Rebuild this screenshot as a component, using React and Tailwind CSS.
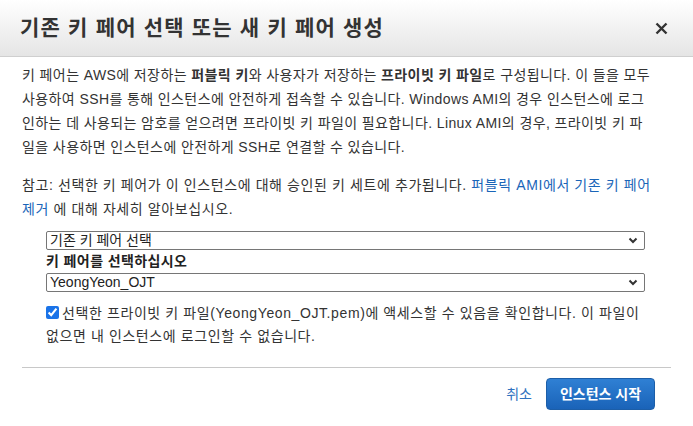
import React from 'react';

const font = { fontFamily: '"Liberation Sans", "Noto Sans CJK KR", sans-serif' };

function Chevron() {
    return (
        <svg width="10" height="7" viewBox="0 0 10 7" className="mr-[6px]">
            <path d="M1.5 1.5 L5 5 L8.5 1.5" fill="none" stroke="#333" strokeWidth="2" />
        </svg>
    );
}

function SelectBox({ value }) {
    return (
        <div className="flex h-[19px] items-center justify-between rounded-[2px] border border-[#767676] bg-white pl-[3px] text-[14px] leading-[17px] tracking-normal text-[#222]">
            <span>{value}</span>
            <Chevron />
        </div>
    );
}

export default function App() {
    return (
        <div className="h-[426px] w-[693px] overflow-hidden bg-white text-[#333]" style={font}>
            {/* Header */}
            <div className="flex h-[57px] items-center justify-between border-b border-[#cfcfcf] bg-gradient-to-b from-white to-[#e5e5e5] pl-[20px] pr-[25px]">
                <h1 className="text-[21px] font-bold tracking-[1.2px] text-[#333]">기존 키 페어 선택 또는 새 키 페어 생성</h1>
                <svg width="13" height="13" viewBox="0 0 13 13">
                    <path d="M1.5 1.5 L11.5 11.5 M11.5 1.5 L1.5 11.5" stroke="#333" strokeWidth="2.4" />
                </svg>
            </div>

            {/* Body */}
            <div className="px-[22px] pt-[6px] text-[14px] tracking-[0.4px]">
                <p className="whitespace-nowrap leading-[24px]">
                    키 페어는 AWS에 저장하는 <b>퍼블릭 키</b>와 사용자가 저장하는 <b>프라이빗 키 파일</b>로 구성됩니다. 이 들을 모두<br />
                    사용하여 SSH를 통해 인스턴스에 안전하게 접속할 수 있습니다. Windows AMI의 경우 인스턴스에 로그<br />
                    인하는 데 사용되는 암호를 얻으려면 프라이빗 키 파일이 필요합니다. Linux AMI의 경우, 프라이빗 키 파<br />
                    일을 사용하면 인스턴스에 안전하게 SSH로 연결할 수 있습니다.
                </p>
                <p className="mt-[14px] whitespace-nowrap leading-[24px] tracking-[0.6px]">
                    참고: 선택한 키 페어가 이 인스턴스에 대해 승인된 키 세트에 추가됩니다. <span className="text-[#1a65b8]">퍼블릭 AMI에서 기존 키 페어</span><br />
                    <span className="text-[#1a65b8]">제거</span> 에 대해 자세히 알아보십시오.
                </p>

                <div className="ml-[24px] mr-[26px] mt-[10px]">
                    <SelectBox value="기존 키 페어 선택" />
                    <div className="mt-[1px] h-[22px] text-[14px] font-bold leading-[20px] text-[#222]">키 페어를 선택하십시오</div>
                    <SelectBox value="YeongYeon_OJT" />

                    <p className="mt-[10px] whitespace-nowrap leading-[23px] tracking-[0.6px] text-[#333]">
                        <input type="checkbox" defaultChecked className="mr-[3px] h-[13px] w-[13px] align-[-1px] accent-[#1a73e8]" />
                        선택한 프라이빗 키 파일(YeongYeon_OJT.pem)에 액세스할 수 있음을 확인합니다. 이 파일이<br />
                        없으면 내 인스턴스에 로그인할 수 없습니다.
                    </p>
                </div>

                <div className="mt-[19px] border-t border-[#c8c8c8]" />

                <div className="flex items-center justify-end gap-[14px] pr-[16px] pt-[10px] tracking-normal">
                    <span className="text-[14px] text-[#2f72c0]">취소</span>
                    <button className="h-[32px] w-[109px] rounded-[4px] border border-[#1c5ea8] bg-gradient-to-b from-[#2f80d4] to-[#1a63b8] text-[14px] font-bold text-white">
                        인스턴스 시작
                    </button>
                </div>
            </div>
        </div>
    );
}
